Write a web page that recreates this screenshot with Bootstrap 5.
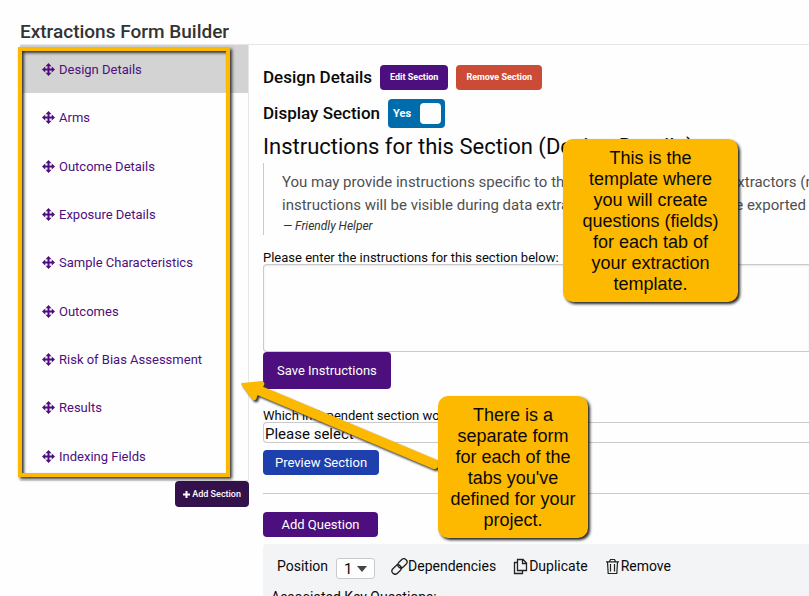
<!DOCTYPE html>
<html lang="en">
<head>
<meta charset="utf-8">
<meta name="viewport" content="width=device-width, initial-scale=1">
<title>Extractions Form Builder</title>
<link href="https://cdn.jsdelivr.net/npm/bootstrap@5.3.0/dist/css/bootstrap.min.css" rel="stylesheet">
<style>
  body { font-family: Roboto, sans-serif; font-size: 13px; line-height: 20px; color: #0a0a0a; background: #fefefe; height: 100vh; overflow: hidden; }
  .builder { padding: 20px 0 0 20px; }
  .page-title { font-size: 19px; line-height: 24px; font-weight: 500; color: #333; margin: 0; }
  .workspace { border-top: 1px solid #e6e6e6; }
  .sidebar { width: 229px; }
  .section-tabs { min-height: 436px; border-right: 1px solid #e6e6e6; border-bottom: 1px solid #e6e6e6; }
  .section-tab { padding: 1px 22px 0; color: #4d0f7d; text-decoration: none; line-height: 21px; }
  .section-tab.active { background: #d3d3d3; }
  .section-tab svg { width: 13px; height: 13px; }
  .btn-site { --bs-btn-color: #fefefe; --bs-btn-hover-color: #fefefe; --bs-btn-bg: #4d0f7d; --bs-btn-hover-bg: #3d0a66; --bs-btn-border-width: 0; --bs-btn-border-radius: 4px; --bs-btn-font-size: 13px; --bs-btn-line-height: 15px; --bs-btn-padding-y: 5px; --bs-btn-padding-x: 12px; }
  .btn-mini { --bs-btn-font-size: 9px; --bs-btn-padding-x: 10px; --bs-btn-font-weight: 700; }
  .btn-dark-purple { --bs-btn-bg: #33114b; --bs-btn-font-weight: 500; --bs-btn-padding-x: 8px; padding-top: 6px; }
  .btn-red { --bs-btn-bg: #cc4b37; --bs-btn-hover-bg: #a53b2a; }
  .btn-blue { --bs-btn-bg: #1e40af; --bs-btn-hover-bg: #1b388f; }
  .btn-large { --bs-btn-padding-y: 11px; --bs-btn-padding-x: 14px; }
  .btn-wide { min-width: 115px; }
  .editor { padding: 20px 0 0 14px; min-width: 0; }
  .row-title { font-size: 17px; line-height: 25px; font-weight: 500; margin: 0; }
  .display-row { margin-top: 9px; }
  .yes-switch { height: 29px; width: 57px; padding: 0 4px 0 5px; border-radius: 4px; background: #006cac; color: #fefefe; font-size: 11px; font-weight: 700; }
  .yes-switch input { appearance: none; width: 21px; height: 21px; margin: 0; border-radius: 4px; background: #fefefe; }
  .instructions-title { font-size: 22px; line-height: 30px; font-weight: 400; margin: 4px 0 1px; }
  .helper { border-left: 1px solid #cacaca; padding: 8px 0 0 18px; margin: 0 0 16px; font-size: 15px; line-height: 23px; color: #505050; }
  .helper footer { font-size: 12px; line-height: 18px; padding-left: 1px; font-style: italic; color: #333; }
  .field { border: 1px solid #cacaca; border-right: 0; border-radius: 4px 0 0 4px; background: #fefefe; color: #0a0a0a; display: block; width: 100%; }
  textarea.field { height: 88px; resize: none; box-shadow: inset 0 1px 2px rgba(10,10,10,.1); }
  select.field { appearance: none; height: 21px; padding: 2px 1px 0; font-size: 15px; line-height: 19px; }
  label { display: block; line-height: 13px; }
  .linked-label { margin-top: 20px; }
  .preview-button { margin-top: 7px; }
  .divider { border-top: 1px solid #cacaca; opacity: 1; margin: 18px 0; }
  .question { background: #f3f4f6; border-radius: 4px 0 0 0; margin-top: 7px; padding: 14px 8px 0; font-size: 14px; }
  .question-bar { padding-left: 6px; line-height: 17px; }
  .question-bar label { line-height: 17px; }
  .question-bar a { color: #0a0a0a; text-decoration: none; }
  .question-bar svg { width: 17px; height: 17px; }
  .position-select { appearance: none; width: 39px; height: 21px; border: 1px solid #cacaca; border-radius: 3px; padding: 0 7px; font-size: 15px; line-height: 21px; color: #0a0a0a; background: #fefefe; }
  .position-wrap::after { content: ""; position: absolute; right: 8px; top: 8px; border: 5px solid transparent; border-top: 6px solid #444; border-bottom: 0; }
  .highlight { position: absolute; left: -2px; top: 2px; width: 212px; height: 430px; border: 4px solid #fdb900; pointer-events: none; box-shadow: 2px 2px 3px #333, inset 2px 2px 3px #333; }
  .callout { position: absolute; background: #fdb900; border-radius: 10px; box-shadow: 2px 2px 3px #222; color: #0a0a0a; font-family: "Liberation Sans", Arial, sans-serif; font-size: 18px; line-height: 21px; text-align: center; padding: 9px; }
  .callout-template { left: 563px; top: 139px; width: 175px; height: 163px; }
  .callout-tabs { left: 438px; top: 396px; width: 150px; height: 142px; }
  .pointer { position: absolute; left: 236px; top: 372px; filter: drop-shadow(2px 2px 1px #333); }
</style>
</head>
<body class="position-relative">
<svg class="d-none">
  <symbol id="move" viewBox="0 0 26 26"><path fill="currentColor" d="M13 0l6 6.500h-4v4.500h4.500V7L26 13l-6.500 6v-4H15v4.500h4L13 26l-6-6.500h4V15H6.500v4L0 13l6.500-6v4H11V6.500H7z"/></symbol>
</svg>
<div class="builder">
  <h1 class="page-title">Extractions Form Builder</h1>
  <div class="workspace d-flex">
    <aside class="sidebar flex-shrink-0">
      <div class="position-relative">
        <nav class="section-tabs d-flex flex-column" aria-label="Sections">
          <a href="#" class="section-tab active flex-fill d-flex align-items-center gap-1"><svg><use href="#move"/></svg>Design Details</a>
          <a href="#" class="section-tab flex-fill d-flex align-items-center gap-1"><svg><use href="#move"/></svg>Arms</a>
          <a href="#" class="section-tab flex-fill d-flex align-items-center gap-1"><svg><use href="#move"/></svg>Outcome Details</a>
          <a href="#" class="section-tab flex-fill d-flex align-items-center gap-1"><svg><use href="#move"/></svg>Exposure Details</a>
          <a href="#" class="section-tab flex-fill d-flex align-items-center gap-1"><svg><use href="#move"/></svg>Sample Characteristics</a>
          <a href="#" class="section-tab flex-fill d-flex align-items-center gap-1"><svg><use href="#move"/></svg>Outcomes</a>
          <a href="#" class="section-tab flex-fill d-flex align-items-center gap-1"><svg><use href="#move"/></svg>Risk of Bias Assessment</a>
          <a href="#" class="section-tab flex-fill d-flex align-items-center gap-1"><svg><use href="#move"/></svg>Results</a>
          <a href="#" class="section-tab flex-fill d-flex align-items-center gap-1"><svg><use href="#move"/></svg>Indexing Fields</a>
        </nav>
        <div class="highlight"></div>
      </div>
      <div class="text-end">
        <button type="button" class="btn btn-site btn-mini btn-dark-purple"><svg width="7" height="7" viewBox="0 0 7 7"><path d="M3.500 0v7M0 3.500h7" stroke="currentColor" stroke-width="2"/></svg> Add Section</button>
      </div>
    </aside>
    <main class="editor flex-fill">
      <div class="d-flex align-items-center">
        <h2 class="row-title me-2">Design Details</h2>
        <button type="button" class="btn btn-site btn-mini me-2">Edit Section</button>
        <button type="button" class="btn btn-site btn-mini btn-red">Remove Section</button>
      </div>
      <div class="display-row d-flex align-items-center">
        <h2 class="row-title me-2">Display Section</h2>
        <label class="yes-switch d-flex align-items-center justify-content-between">Yes <input type="checkbox" checked></label>
      </div>
      <h3 class="instructions-title text-nowrap">Instructions for this Section (Design Details)</h3>
      <blockquote class="helper text-nowrap">
        You may provide instructions specific to this section to the team of extractors (n<br>
        instructions will be visible during data extraction and these will not be exported
        <footer>— Friendly Helper</footer>
      </blockquote>
      <label for="instructions">Please enter the instructions for this section below:</label>
      <textarea id="instructions" class="field"></textarea>
      <button type="button" class="btn btn-site btn-large d-block">Save Instructions</button>
      <label class="linked-label" for="linked">Which independent section would you like to link?</label>
      <select id="linked" class="field"><option>Please select</option></select>
      <button type="button" class="btn btn-site btn-blue btn-wide d-block preview-button">Preview Section</button>
      <hr class="divider">
      <button type="button" class="btn btn-site btn-wide d-block">Add Question</button>
      <section class="question">
        <div class="question-bar d-flex align-items-start">
          <label for="position" class="me-2">Position</label>
          <div class="position-wrap position-relative me-3"><select id="position" class="position-select"><option>1</option></select></div>
          <a href="#" class="d-flex me-3"><svg viewBox="0 0 17 17" fill="none" stroke="#222" stroke-width="1.300"><rect x="6.200" y="2.200" width="10.400" height="6.400" rx="3.200" transform="rotate(-45 11.400 5.400)"/><rect x=".4" y="8.400" width="10.400" height="6.400" rx="3.200" transform="rotate(-45 5.600 11.600)"/></svg>Dependencies</a>
          <a href="#" class="d-flex me-3"><svg viewBox="0 0 17 17" fill="none" stroke="#222" stroke-width="1.300"><path d="M5.500 1.500h5.500l3.500 3.500v7.500h-9zM10.500 1.500v4h4M5.500 4.500h-3v11h8v-3"/></svg>Duplicate</a>
          <a href="#" class="d-flex"><svg viewBox="0 0 17 17" fill="none" stroke="#222" stroke-width="1.200"><path d="M2 3.800h13M5.500 3.500l1-2h4l1 2M3.500 4l.7 11.500h8.600L13.500 4M6.500 6v7.500M10.500 6v7.500"/></svg>Remove</a>
        </div>
        <div class="mt-2">Associated Key Questions:</div>
      </section>
    </main>
  </div>
</div>
<svg class="pointer" width="208" height="102" viewBox="0 0 208 102"><path d="M22 18L198 92" stroke="#fdb900" stroke-width="10" stroke-linecap="round"/><path d="M6 12L26 10Q28 11 27 13L25 16L20 24Q20 28 17 27Z" fill="#fdb900" stroke="#fdb900" stroke-width="2" stroke-linejoin="round"/></svg>
<div class="callout callout-template">This is the<br>template where<br>you will create<br>questions (fields)<br>for each tab of<br>your extraction<br>template.</div>
<div class="callout callout-tabs">There is a<br>separate form<br>for each of the<br>tabs you've<br>defined for your<br>project.</div>
<script src="https://cdn.jsdelivr.net/npm/bootstrap@5.3.0/dist/js/bootstrap.bundle.min.js"></script>
</body>
</html>
